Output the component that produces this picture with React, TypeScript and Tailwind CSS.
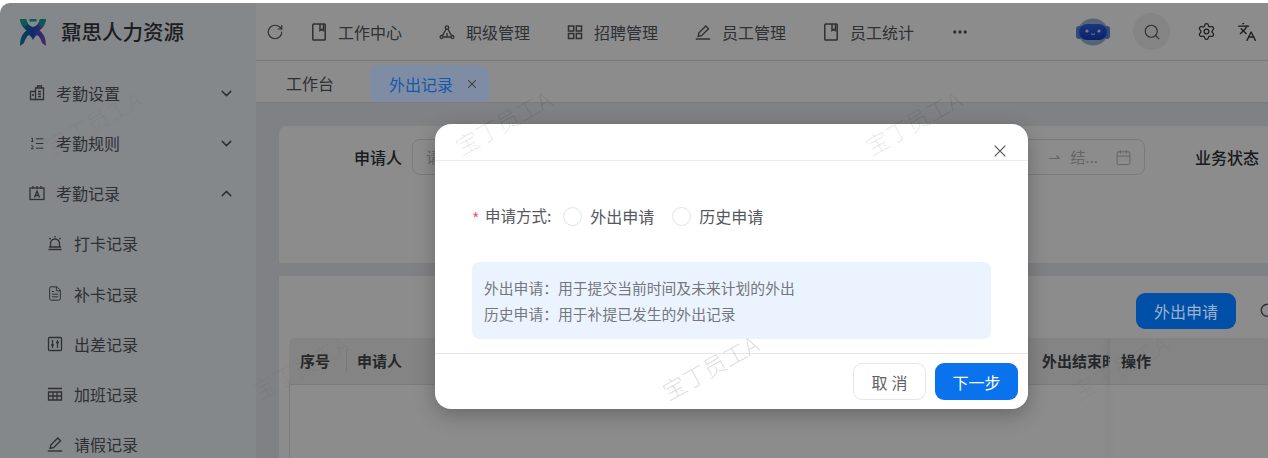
import { ChevronDown, ChevronUp, MoreHorizontal, RotateCw, Search, Settings, X, Languages, Calendar, FileText, ListOrdered } from "lucide-react";
import type { ReactNode } from "react";

function BookIcon() {
  return (
    <svg width="16" height="18" viewBox="0 0 16 18" fill="none" stroke="currentColor" strokeWidth="1.5">
      <rect x="1.800" y="1" width="12.400" height="16" rx="0.8" />
      <path d="M9 1v6.500l1.700-1.200 1.700 1.200V1" />
    </svg>
  );
}

function PenIcon() {
  return (
    <svg width="16" height="16" viewBox="0 0 16 16" fill="none" stroke="currentColor" strokeWidth="1.4">
      <path d="M.8 15h14.400" />
      <path d="M3.200 12.300 3.800 9 10.800 2l2.700 2.700-7 7z" />
    </svg>
  );
}

function NodesIcon() {
  return (
    <svg width="16" height="16" viewBox="0 0 16 16" fill="none" stroke="currentColor" strokeWidth="1.3">
      <circle cx="8" cy="3.500" r="1.700" />
      <circle cx="2.600" cy="13" r="1.500" />
      <circle cx="13.400" cy="13" r="1.500" />
      <path d="M7.200 5 3.400 11.600M8.800 5l3.800 6.600M4.100 13h7.800M8 9v4" />
    </svg>
  );
}

function GridIcon() {
  return (
    <svg width="16" height="16" viewBox="0 0 16 16" fill="none" stroke="currentColor" strokeWidth="1.5">
      <rect x="1.500" y="2" width="5.200" height="5" />
      <rect x="9.300" y="2" width="5.200" height="5" />
      <rect x="1.500" y="9.500" width="5.200" height="5" />
      <rect x="9.300" y="9.500" width="5.200" height="5" />
    </svg>
  );
}

function Logo() {
  return (
    <svg width="28" height="30" viewBox="0 0 28 30">
      <defs>
        <linearGradient id="lg1" x1="0" y1="0" x2="1" y2="0">
          <stop offset="0" stopColor="#0f7f9c" />
          <stop offset="0.5" stopColor="#1d4fc4" />
          <stop offset="1" stopColor="#8a4fc0" />
        </linearGradient>
      </defs>
      <path d="M1 2h6c1 4 3 7 7 8 4-1 6-4 7-8h6c-.5 5-3 9-6.500 11.500C24 16 27 20 27 29l-4-3c-1-4-3-7-5-8-2 1-3 3-4 5-1-2-2-4-4-5-2 1-4 4-5 8l-4 3c0-9 3-13 6.500-15.500C4 11 1.500 7 1 2z" fill="url(#lg1)" />
      <path d="M1 2h6c.5 2 1.200 3.500 2 5L5.500 10C3 8 1.300 5.500 1 2z" fill="#14a79a" />
      <path d="M21 2h6c-.3 3.500-2 6-4.500 8L19 7c.8-1.500 1.500-3 2-5z" fill="#14a79a" />
      <rect x="10.500" y="2" width="7" height="2.500" fill="#14a79a" />
    </svg>
  );
}

function Robot() {
  return (
    <svg width="36" height="28" viewBox="0 0 36 28">
      <defs>
        <linearGradient id="rb1" x1="0" y1="0" x2="0" y2="1">
          <stop offset="0" stopColor="#2f62e8" />
          <stop offset="1" stopColor="#123fc4" />
        </linearGradient>
      </defs>
      <ellipse cx="18" cy="14" rx="15" ry="13.500" fill="#9fb6d6" />
      <rect x="1" y="8" width="6" height="13" rx="3" fill="#5a86e0" />
      <rect x="29" y="8" width="6" height="13" rx="3" fill="#5a86e0" />
      <rect x="4" y="6" width="28" height="16" rx="8" fill="url(#rb1)" />
      <circle cx="12" cy="13" r="1.600" fill="#cfe6ff" />
      <circle cx="24" cy="13" r="1.600" fill="#cfe6ff" />
      <path d="M16 15.500c1 1.200 3 1.200 4 0" stroke="#cfe6ff" strokeWidth="1" fill="none" />
    </svg>
  );
}

function SmallIcon({ d }: { d: ReactNode }) {
  return (
    <svg width="16" height="16" viewBox="0 0 16 16" fill="none" stroke="currentColor" strokeWidth="1.3">
      {d}
    </svg>
  );
}

const topNav: { icon: ReactNode; label: string }[] = [
  { icon: <BookIcon />, label: "工作中心" },
  { icon: <NodesIcon />, label: "职级管理" },
  { icon: <GridIcon />, label: "招聘管理" },
  { icon: <PenIcon />, label: "员工管理" },
  { icon: <BookIcon />, label: "员工统计" },
];

const menu: { icon: ReactNode; label: string; arrow?: "up" | "down"; sub?: boolean }[] = [
  {
    icon: <SmallIcon d={<><path d="M1.500 14.500V6.500h5v8zM6.500 14.500V3h8v11.500z" /><path d="M8.500 3V1h4v2M9 6.500h3M9 9h3M9 11.500h3M3 10h2" /></>} />,
    label: "考勤设置",
    arrow: "down",
  },
  { icon: <ListOrdered size={17} strokeWidth={1.5} />, label: "考勤规则", arrow: "down" },
  {
    icon: <SmallIcon d={<><rect x="1" y="3" width="14" height="11.500" /><path d="M4 1v3M8 1v3M12 1v3M5.500 12.500 8 6l2.500 6.500M6.500 10.500h3" /></>} />,
    label: "考勤记录",
    arrow: "up",
  },
  {
    icon: <SmallIcon d={<><path d="M3.500 12V8.500a4.500 4.500 0 0 1 9 0V12M1.500 14.500h13M2 12h12M8 1v1.500M2.500 3 3.600 4.200M13.500 3l-1.100 1.200" /></>} />,
    label: "打卡记录",
    sub: true,
  },
  { icon: <FileText size={17} strokeWidth={1.5} />, label: "补卡记录", sub: true },
  {
    icon: <SmallIcon d={<><rect x="1.500" y="1.500" width="13" height="13" rx="1" /><path d="M5.500 4v8M10.500 4v8M4 9h3M9 6.500h3" /></>} />,
    label: "出差记录",
    sub: true,
  },
  {
    icon: <SmallIcon d={<><path d="M1 2.500h14M1.500 6h13v8h-13zM1.500 10h13M6 6v8M10 6v8" /></>} />,
    label: "加班记录",
    sub: true,
  },
  { icon: <PenIcon />, label: "请假记录", sub: true },
];

const marks = [
  "left-[93px] top-[119px] text-black/5",
  "left-[503px] top-[119px] text-black/10",
  "left-[913px] top-[119px] text-black/10",
  "left-[300px] top-[364px] text-black/5",
  "left-[710px] top-[364px] text-black/15",
  "left-[1120px] top-[364px] text-black/5",
];

export default function App() {
  return (
    <div className="w-[1268px] h-[458px] bg-white pt-[3px] overflow-hidden font-['Noto_Sans_CJK_SC','Noto_Sans',sans-serif]">
      <div className="relative flex h-[455px] rounded-tl-[10px] overflow-hidden text-[#54585e]">
        {/* sidebar */}
        <aside className="w-[256px] shrink-0 bg-[#f0f7fd]">
          <div className="flex items-center h-[57px] pl-[19px]">
            <Logo />
            <span className="ml-[14px] text-[20.5px] font-medium text-[#34373c]">鼐思人力资源</span>
          </div>
          <nav className="pt-[8px]">
            {menu.map((m) => (
              <div key={m.label} className={`flex items-center h-[50.15px] pr-[21px] ${m.sub ? "pl-[47px]" : "pl-[29px]"}`}>
                <span className="w-[16px] flex justify-center">{m.icon}</span>
                <span className="text-[16px] flex-1 ml-[11px]">{m.label}</span>
                {m.arrow === "down" && <ChevronDown size={17} strokeWidth={2} />}
                {m.arrow === "up" && <ChevronUp size={17} strokeWidth={2} />}
              </div>
            ))}
          </nav>
        </aside>

        {/* main */}
        <div className="flex-1 min-w-0 flex flex-col bg-[#e9ecf0]">
          <header className="flex items-center h-[58px] bg-white border-b border-[#dcdcdc] pl-[10px] shrink-0">
            <RotateCw size={18} strokeWidth={1.6} />
            <div className="flex items-center ml-[27px] gap-[37px]">
              {topNav.map((n) => (
                <div key={n.label} className="flex items-center gap-[11px]">
                  <span className="w-[16px] flex justify-center">{n.icon}</span>
                  <span className="text-[16px]">{n.label}</span>
                </div>
              ))}
            </div>
            <MoreHorizontal size={18} strokeWidth={2.4} className="ml-[37px]" />
            <div className="ml-[106px]">
              <Robot />
            </div>
            <div className="ml-[22px] w-[37px] h-[37px] rounded-full bg-[#f1f1f1] flex items-center justify-center">
              <Search size={18} strokeWidth={1.5} />
            </div>
            <Settings size={19} strokeWidth={1.6} className="ml-[27px] text-[#33363a]" />
            <Languages size={20} strokeWidth={1.6} className="ml-[21px] text-[#33363a]" />
          </header>

          <div className="flex items-end h-[42px] bg-white border-b border-[#dcdee2] pl-[30px] shrink-0">
            <span className="text-[16px] pb-[7px]">工作台</span>
            <div className="relative z-10 ml-[36px] w-[119px] h-[37px] rounded-t-[10px] bg-[#7e8da3] flex items-center pl-[19px] text-[#1558ab]">
              <span className="text-[16px]">外出记录</span>
              <X size={14} strokeWidth={1.8} className="ml-[12px] text-[#33363a]" />
            </div>
          </div>

          <div className="flex-1 min-h-0 overflow-hidden pl-[23px] pt-[23px]">
            <section className="w-[1100px] h-[137px] bg-white rounded-t-[8px] flex pt-[13px]">
              <span className="ml-[75px] mt-[6px] text-[16px] font-medium text-[#2e3135]">申请人</span>
              <div className="ml-[10px] w-[300px] h-[36px] rounded-[8px] border border-[#dcdfe4] pl-[13px] flex items-center text-[15px] text-[#b8b8b8]">
                请输入
              </div>
              <div className="ml-[133px] w-[300px] h-[36px] rounded-[8px] border border-[#dcdfe4] flex items-center justify-end pr-[12px] text-[15px] text-[#b8b8b8] gap-[10px]">
                <span>⇀</span>
                <span>结...</span>
                <Calendar size={17} strokeWidth={1.4} className="ml-[7px]" />
              </div>
              <span className="ml-[50px] mt-[6px] text-[16px] font-medium text-[#2e3135]">业务状态</span>
            </section>

            <section className="w-[1100px] h-[200px] mt-[13px] bg-white px-[10px]">
              <div className="flex items-center h-[62px] pt-[7px]">
                <div className="relative z-10 ml-[847px] w-[100px] h-[36px] rounded-[9px] bg-[#0050a8] text-[#9fb0cc] text-[16px] flex items-center justify-center">外出申请</div>
                <Search size={18} strokeWidth={1.7} className="ml-[23px] shrink-0" />
              </div>
              <div className="flex items-center h-[47px] bg-[#f0f0f0] border-b border-[#e0e0e0] rounded-t-[6px] text-[15px] font-bold text-[#44474c] relative overflow-hidden -mr-[12px]">
                <span className="ml-[11px] w-[46px]">序号</span>
                <span className="h-[24px] border-l border-[#dcdcdc]" />
                <span className="ml-[10px]">申请人</span>
                <span className="ml-[640px] w-[68px] overflow-hidden whitespace-nowrap">外出结束时间</span>
                <div className="absolute left-[821px] top-0 bottom-0 w-[300px] bg-[#f0f0f0] pl-[11px] flex items-center shadow-[-3px_0_6px_rgba(0,0,0,0.06)]">操作</div>
              </div>
              <div className="h-[91px] border-l border-[#e4e4e4] relative">
                <div className="absolute left-[821px] top-0 bottom-0 w-[2px] shadow-[-3px_0_6px_rgba(0,0,0,0.08)]" />
              </div>
            </section>
          </div>
        </div>

        {/* mask */}
        <div className="absolute inset-0 bg-black/45" />

        {/* dialog */}
        <div className="absolute left-[435px] top-[121px] w-[593px] h-[285px] bg-white rounded-[16px] shadow-[0_6px_20px_rgba(0,0,0,0.25)] flex flex-col">
          <div className="h-[37px] border-b border-[#ececec] flex justify-end items-end pr-[18px] shrink-0">
            <X size={20} strokeWidth={1.3} className="text-[#606060] -mb-[1px]" />
          </div>
          <div className="flex-1 pl-[37px] pr-[37px]">
            <div className="flex items-center mt-[45px] h-[20px] text-[16px] text-[#55585e]">
              <span className="text-[#f5587b] text-[16px] w-[13px] leading-[20px] pt-[3px]">*</span>
              <span className="text-[15.5px]">申请方式:</span>
              <span className="ml-[12px] w-[19px] h-[19px] rounded-full border border-[#e2e4e8]" />
              <span className="ml-[8px]">外出申请</span>
              <span className="ml-[18px] w-[19px] h-[19px] rounded-full border border-[#e2e4e8]" />
              <span className="ml-[8px]">历史申请</span>
            </div>
            <div className="mt-[36px] h-[77px] rounded-[7px] bg-[#ebf4fe] pl-[12px] pt-[13px] text-[14.8px] leading-[26px] text-[#74777c]">
              <div>外出申请：用于提交当前时间及未来计划的外出</div>
              <div>历史申请：用于补提已发生的外出记录</div>
            </div>
          </div>
          <div className="h-[56px] border-t border-[#e6e6e6] flex items-center justify-end gap-[9px] pr-[10px] shrink-0">
            <div className="w-[73px] h-[37px] rounded-[9px] border border-[#e5e6e8] text-[#606266] text-[16px] flex items-center justify-center tracking-[4px] pl-[4px]">取消</div>
            <div className="w-[83px] h-[37px] rounded-[9px] bg-[#0a72ec] text-white text-[16px] flex items-center justify-center">下一步</div>
          </div>
        </div>

        {/* watermarks */}
        {marks.map((c) => (
          <span
            key={c}
            className={`absolute -translate-x-1/2 -translate-y-1/2 -rotate-[29deg] whitespace-nowrap text-[23px] font-light pointer-events-none z-20 ${c}`}
          >
            宝丁员工A
          </span>
        ))}
      </div>
    </div>
  );
}
